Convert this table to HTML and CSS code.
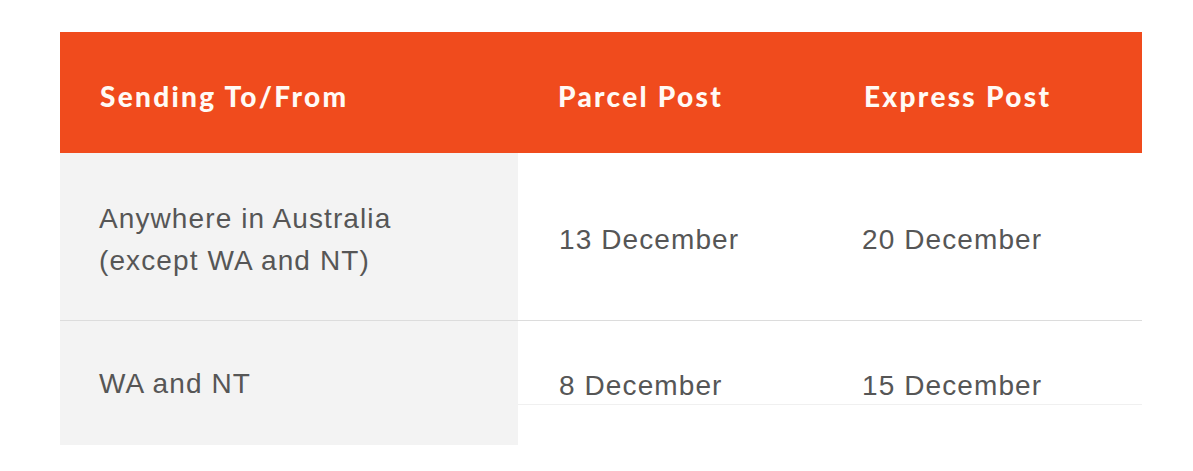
FILE: index.html
```html
<!DOCTYPE html>
<html lang="en">
<head>
<meta charset="utf-8">
<title>Christmas posting dates</title>
<link rel="stylesheet" href="styles.css">
</head>
<body>
<div class="table">
  <div class="head first">Sending To/From</div>
  <div class="head">Parcel Post</div>
  <div class="head last">Express Post</div>

  <div class="cell place r1">Anywhere in Australia<br>(except WA and NT)</div>
  <div class="cell date r1">13 December</div>
  <div class="cell date r1 c3">20 December</div>

  <div class="cell place r2">WA and NT</div>
  <div class="cell date r2">8 December</div>
  <div class="cell date r2 c3">15 December</div>
</div>
</body>
</html>
```
FILE: styles.css
```css
html, body {
  margin: 0;
  padding: 0;
  background: #ffffff;
}

body {
  padding: 32px 0 0 60px;
}

.table {
  display: grid;
  grid-template-columns: 458px 304px 320px;
  grid-template-rows: 121px 168px auto;
  align-items: start;
}

.head {
  background: #f04b1d;
  color: #fffaf5;
  font-family: Lato, "Open Sans", sans-serif;
  font-weight: 900;
  font-size: 28px;
  letter-spacing: 2.3px;
  height: 121px;
  box-sizing: border-box;
  display: flex;
  align-items: center;
  padding: 6px 0 0 40px;
}

.head.last {
  padding-left: 42px;
}

.cell {
  font-family: "Liberation Sans", Arial, sans-serif;
  font-size: 28px;
  letter-spacing: 1.1px;
  color: #565656;
  box-sizing: border-box;
}

.place {
  background: #f3f3f3;
  padding-left: 39px;
}

.date {
  padding-left: 41px;
}

.c3 {
  padding-left: 40px;
}

.r1 {
  height: 168px;
  line-height: 42px;
  border-bottom: 1px solid #dcdcdc;
  display: flex;
  align-items: center;
  padding-top: 6px;
}

.r2.place {
  height: 124px;
  line-height: 42px;
  padding-top: 42px;
}

.r2.date {
  height: 84px;
  line-height: 28px;
  padding-top: 51px;
  border-bottom: 1px solid #f0f0f0;
}
```
